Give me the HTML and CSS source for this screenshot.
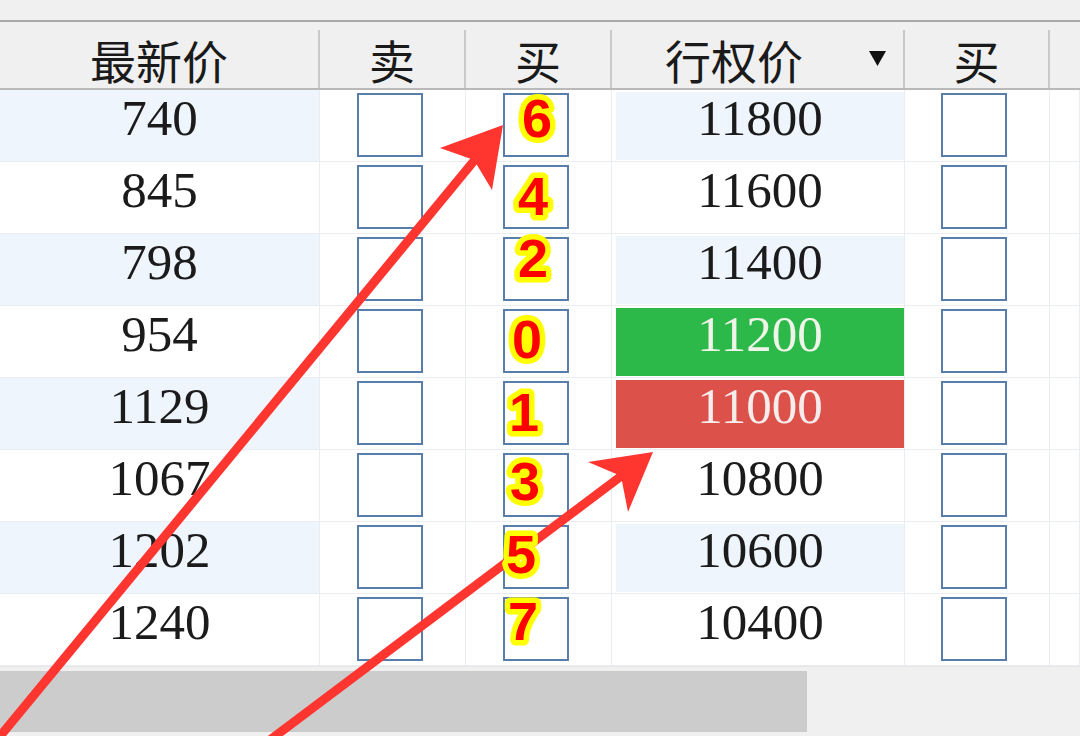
FILE: index.html
```html
<!DOCTYPE html>
<html lang="zh-CN">
<head>
    <meta charset="UTF-8">
    <title>期权T型报价</title>
    <link rel="stylesheet" href="styles.css">
</head>
<body>
    <div class="screen">
        <div class="top-strip"></div>

        <div class="quote-grid">
            <!-- 表头 -->
            <div class="th"><span class="th-label">最新价</span></div>
            <div class="th"><span class="th-label">卖</span></div>
            <div class="th"><span class="th-label">买</span></div>
            <div class="th th-strike">
                <span class="th-label">行权价</span>
                <span class="sort-arrow">
                    <svg width="19" height="17" viewBox="0 0 19 17"><polygon points="1,1 18,1 9.5,16" fill="#111"/></svg>
                </span>
            </div>
            <div class="th"><span class="th-label">买</span></div>
            <div class="th th-last"></div>

            <!-- 第1行 -->
            <div class="td num alt">740</div>
            <div class="td chk"><span class="box"></span></div>
            <div class="td chk"><span class="box"></span></div>
            <div class="td strike"><div class="val alt">11800</div></div>
            <div class="td chk"><span class="box"></span></div>
            <div class="td"></div>

            <!-- 第2行 -->
            <div class="td num">845</div>
            <div class="td chk"><span class="box"></span></div>
            <div class="td chk"><span class="box"></span></div>
            <div class="td strike"><div class="val">11600</div></div>
            <div class="td chk"><span class="box"></span></div>
            <div class="td"></div>

            <!-- 第3行 -->
            <div class="td num alt">798</div>
            <div class="td chk"><span class="box"></span></div>
            <div class="td chk"><span class="box"></span></div>
            <div class="td strike"><div class="val alt">11400</div></div>
            <div class="td chk"><span class="box"></span></div>
            <div class="td"></div>

            <!-- 第4行 平值 -->
            <div class="td num">954</div>
            <div class="td chk"><span class="box"></span></div>
            <div class="td chk"><span class="box"></span></div>
            <div class="td strike"><div class="val up">11200</div></div>
            <div class="td chk"><span class="box"></span></div>
            <div class="td"></div>

            <!-- 第5行 -->
            <div class="td num alt">1129</div>
            <div class="td chk"><span class="box"></span></div>
            <div class="td chk"><span class="box"></span></div>
            <div class="td strike"><div class="val down">11000</div></div>
            <div class="td chk"><span class="box"></span></div>
            <div class="td"></div>

            <!-- 第6行 -->
            <div class="td num">1067</div>
            <div class="td chk"><span class="box"></span></div>
            <div class="td chk"><span class="box"></span></div>
            <div class="td strike"><div class="val">10800</div></div>
            <div class="td chk"><span class="box"></span></div>
            <div class="td"></div>

            <!-- 第7行 -->
            <div class="td num alt">1202</div>
            <div class="td chk"><span class="box"></span></div>
            <div class="td chk"><span class="box"></span></div>
            <div class="td strike"><div class="val alt">10600</div></div>
            <div class="td chk"><span class="box"></span></div>
            <div class="td"></div>

            <!-- 第8行 -->
            <div class="td num">1240</div>
            <div class="td chk"><span class="box"></span></div>
            <div class="td chk"><span class="box"></span></div>
            <div class="td strike"><div class="val">10400</div></div>
            <div class="td chk"><span class="box"></span></div>
            <div class="td"></div>
        </div>

        <div class="hscroll">
            <div class="hscroll-thumb"></div>
        </div>

        <!-- 标注层：箭头和序号 -->
        <svg class="marks" width="1080" height="736" viewBox="0 0 1080 736">
            <g class="arrow">
                <line x1="-8" y1="746" x2="478" y2="156" />
                <polygon points="503,125 440,148 474,160 492,190" />
            </g>
            <g class="arrow">
                <line x1="262" y1="746" x2="624" y2="474" />
                <polygon points="653,452 588,462 621,476 628,512" />
            </g>
            <g class="order">
                <text x="537" y="137">6</text>
                <text x="533" y="215">4</text>
                <text x="533" y="277">2</text>
                <text x="527" y="358">0</text>
                <text x="524" y="431">1</text>
                <text x="525" y="500">3</text>
                <text x="521" y="573">5</text>
                <text x="523" y="640">7</text>
            </g>
        </svg>
    </div>
</body>
</html>
```

FILE: styles.css
```css
body {
    margin: 0;
    background-color: #f0f0f0;
    font-family: "Liberation Serif", "Noto Sans CJK SC", serif;
    color: #1b1b1b;
}
.screen {
    position: relative;
    width: 1080px;
    height: 736px;
    overflow: hidden;
    background-color: #fff;
}
.top-strip {
    height: 20px;
    background-color: #f0f0f0;
    border-bottom: 2px solid #a9a9a9;
}
.quote-grid {
    display: grid;
    grid-template-columns: 320px 146px 146px 293px 145px 1fr;
    grid-template-rows: 68px repeat(8, 72px);
}
.th {
    background-color: #f0f0f0;
    border-bottom: 2px solid #b9b9b9;
    display: flex;
    align-items: flex-end;
}
.th-label {
    flex: 1;
    height: 58px;
    border-right: 2px solid #c9c9c9;
    font-family: "Noto Sans CJK SC", sans-serif;
    font-size: 46px;
    line-height: 58px;
    text-align: center;
    color: #1a1a1a;
}
.th-strike .th-label {
    border-right: none;
    padding-left: 4px;
}
.th-strike .sort-arrow {
    width: 53px;
    height: 58px;
    border-right: 2px solid #c9c9c9;
    display: flex;
    justify-content: center;
    padding-top: 20px;
    box-sizing: border-box;
}
.th-last {
    background-color: #f0f0f0;
}
.td {
    border-right: 1px solid #e9ecf0;
    border-bottom: 1px solid #e9ecf0;
    background-color: #fff;
}
.num {
    font-size: 51px;
    text-align: center;
    line-height: 56px;
}
.alt {
    background-color: #eef5fd;
}
.chk {
    display: flex;
    justify-content: center;
    padding-top: 3px;
    padding-right: 6px;
}
.box {
    width: 62px;
    height: 60px;
    border: 2px solid #5a7eab;
    background-color: #fff;
}
.strike {
    padding: 2px 0 1px 4px;
}
.val {
    height: 100%;
    font-size: 51px;
    line-height: 52px;
    text-align: center;
}
.val.up {
    background-color: #2db84a;
    color: #eef5e8;
}
.val.down {
    background-color: #dc524b;
    color: #f6ecec;
}
.hscroll {
    height: 70px;
    background-color: #f0f0f0;
    border-top: 1px solid #e6e6e6;
    padding: 4px 0;
    box-sizing: border-box;
}
.hscroll-thumb {
    width: 807px;
    height: 100%;
    background-color: #cdcccd;
}
.marks {
    position: absolute;
    left: 0;
    top: 0;
    pointer-events: none;
}
.arrow line {
    stroke: #ff3530;
    stroke-width: 9;
}
.arrow polygon {
    fill: #ff3530;
}
.order text {
    font-family: "Liberation Sans", Arial, sans-serif;
    font-weight: bold;
    font-size: 54px;
    text-anchor: middle;
    fill: #f00;
    stroke: #ffff00;
    stroke-width: 11;
    stroke-linejoin: round;
    paint-order: stroke;
}
```
